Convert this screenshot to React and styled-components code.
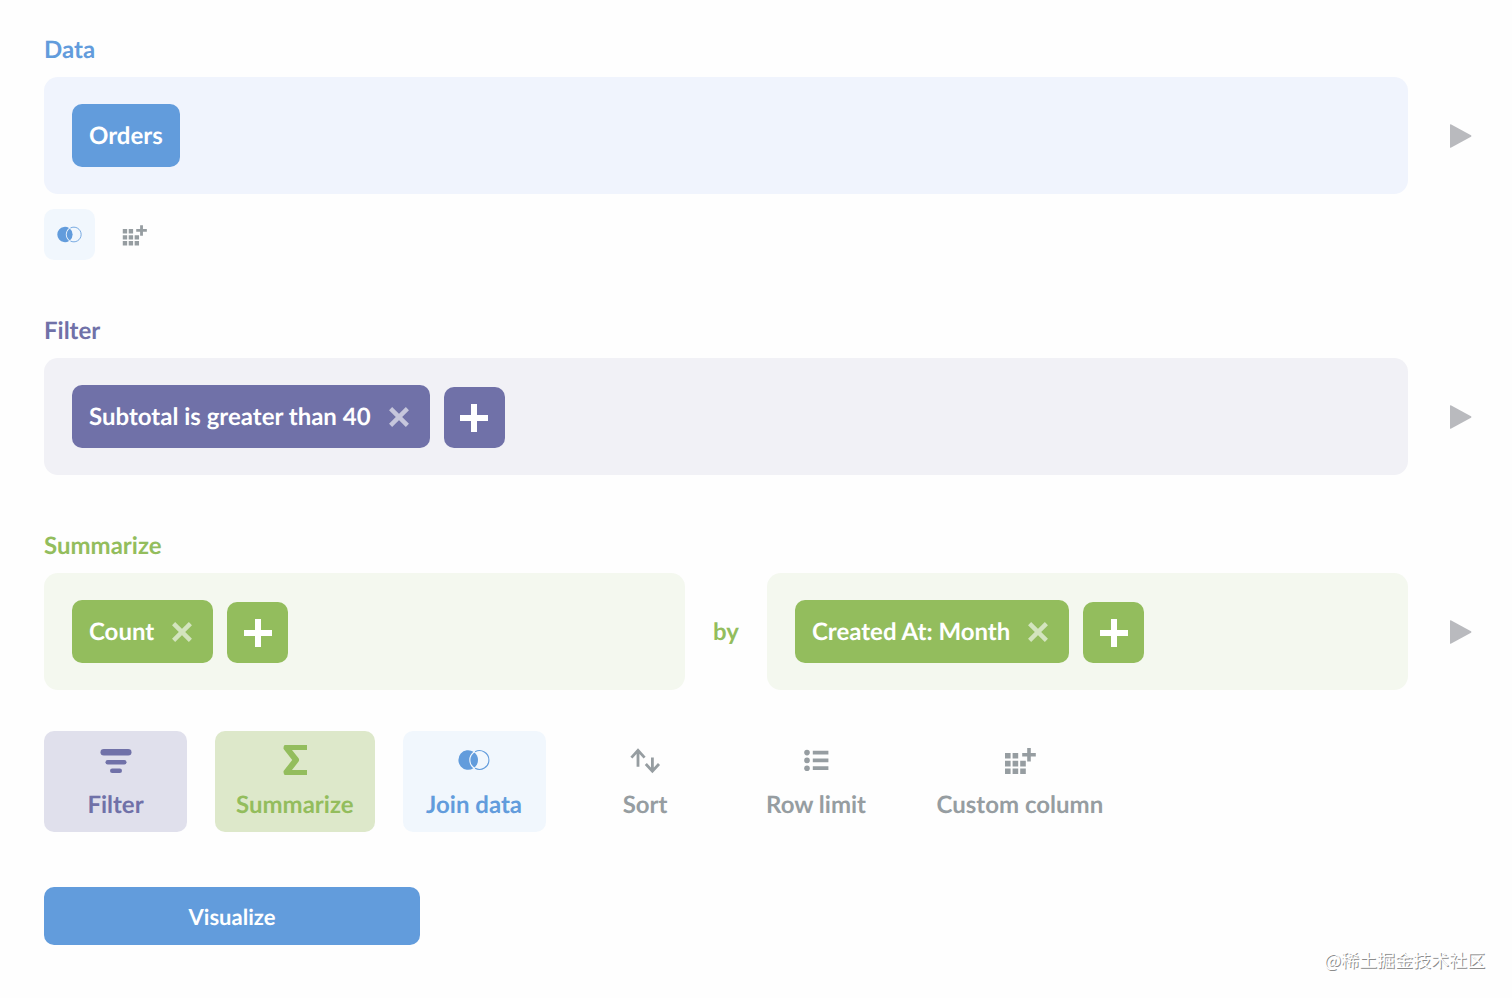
import React from 'react';
import styled, { createGlobalStyle } from 'styled-components';

const colors = {
  brand: '#629cdc',
  filter: '#7071a8',
  summarize: '#93bd5d',
  grey: '#969da1',
};

// styled-components
const GlobalStyle = createGlobalStyle`
  * {
    box-sizing: border-box;
  }
  body {
    margin: 0;
    background-color: #fefefe;
    font-family: Lato, 'Open Sans', sans-serif;
    font-weight: bold;
    font-size: 24px;
    line-height: 31px;
    text-rendering: geometricPrecision;
  }
  button {
    border: none;
    margin: 0;
    padding: 0;
    font: inherit;
    text-rendering: inherit;
    cursor: pointer;
  }
  svg {
    display: block;
    flex: none;
  }
`;

const Notebook = styled.main`
  display: flex;
  flex-direction: column;
  align-items: stretch;
  gap: 55px;
  padding: 34px 40px 0 44px;
`;

const Steps = styled.div`
  display: flex;
  flex-direction: column;
  gap: 41px;
`;

const StepList = styled.div`
  display: flex;
  flex-direction: column;
  gap: 55px;
`;

const Title = styled.h2`
  margin: 0 0 12px;
  font-size: 24px;
  line-height: 31px;
  color: ${props => props.$color};
`;

const StepRow = styled.div`
  display: flex;
  align-items: center;
  gap: 42px;
`;

const StepBody = styled.div`
  flex: 1;
  display: flex;
  align-items: center;
  gap: 28px;
`;

const Panel = styled.div`
  flex: 1 1 0;
  display: flex;
  align-items: flex-end;
  gap: 14px;
  padding: 27px 28px;
  border-radius: 14px;
  background-color: ${props => props.$bg};
`;

const Chip = styled.div`
  display: flex;
  align-items: center;
  gap: 14px;
  height: 63px;
  padding: 0 17px;
  border-radius: 10px;
  color: #fff;
  background-color: ${props => props.$color};
`;

const RemoveButton = styled.button`
  display: flex;
  align-items: center;
  justify-content: center;
  width: 28px;
  height: 28px;
  color: #fff;
  background: none;
  opacity: 0.6;
`;

const AddButton = styled.button`
  display: flex;
  align-items: center;
  justify-content: center;
  width: 61px;
  height: 61px;
  border-radius: 10px;
  color: #fff;
  background-color: ${props => props.$color};
`;

const PreviewButton = styled.button`
  width: 22px;
  height: 24px;
  color: #b9babe;
  background: none;
`;

const By = styled.span`
  color: ${colors.summarize};
`;

const SmallActions = styled.div`
  display: flex;
  gap: 14px;
  margin-top: 15px;
`;

const SmallAction = styled.button`
  display: flex;
  align-items: center;
  justify-content: center;
  width: 51px;
  height: 51px;
  border-radius: 10px;
  color: ${props => props.$color};
  background-color: ${props => props.$bg || 'transparent'};
`;

const Actions = styled.div`
  display: flex;
  flex-wrap: wrap;
  gap: 28px;
`;

const Action = styled.button`
  display: flex;
  flex-direction: column;
  align-items: center;
  gap: 13px;
  height: 101px;
  min-width: 143px;
  padding: 13px 21px 12px;
  border-radius: 10px;
  color: ${props => props.$color};
  background-color: ${props => props.$bg || 'transparent'};
`;

const VisualizeButton = styled.button`
  width: 376px;
  height: 58px;
  border-radius: 10px;
  font-size: 22px;
  color: #fff;
  background-color: ${colors.brand};
`;

const Footer = styled.footer`
  padding: 3px 27px 0;
  text-align: right;
  font-family: 'Noto Sans CJK SC', sans-serif;
  font-weight: normal;
  font-size: 18px;
  line-height: 24px;
  color: #fff;
  text-shadow: 1px 1px 0 #8c8c8c;
`;
// end styled-components

const CloseIcon = () => (
  <svg width="20" height="20" viewBox="0 0 20 20" stroke="currentColor" strokeWidth="4.4" strokeLinecap="butt">
    <path d="M1.6 1.6 18.4 18.4M18.4 1.6 1.6 18.4" fill="none" />
  </svg>
);

const PlusIcon = () => (
  <svg width="28" height="28" viewBox="0 0 28 28" fill="currentColor">
    <path d="M11 0h6v11h11v6H17v11h-6V17H0v-6h11z" />
  </svg>
);

const PlayIcon = () => (
  <svg width="22" height="24" viewBox="0 0 22 24" fill="currentColor">
    <path d="M0 .8Q0 0 .8.3L21 11.2q1 .8 0 1.6L.8 23.7Q0 24 0 23.2z" />
  </svg>
);

const JoinIcon = ({ size }) => (
  <svg width={size} height={size} viewBox="0 0 32 32" fill="currentColor">
    <path d="M15.4 7.7A9.8 9.8 0 1 0 15.4 24.3A10.4 10.4 0 0 1 15.4 7.7z" />
    <path d="M16.4 8.4A9.8 9.8 0 0 1 16.4 23.6A9.2 9.2 0 0 1 16.4 8.4z" />
    <path d="M17.1 7.7A9.4 9.4 0 1 1 17.1 24.3" fill="none" stroke="currentColor" strokeWidth="1.1" />
  </svg>
);

const ColumnIcon = ({ size }) => (
  <svg width={size} height={size} viewBox="0 0 32 32" fill="currentColor">
    <path d="M1 9h5.6v5.6H1zM8.6 9h5.6v5.6H8.6zM1 16.8h5.6v5.6H1zM8.6 16.8h5.6v5.6H8.6zM16.2 16.8h5.6v5.6h-5.6z" />
    <path d="M1 24.4h5.6V30H1zM8.6 24.4h5.6V30H8.6zM16.2 24.4h5.6V30h-5.6z" />
    <path d="M23.2 4h3.6v5h5v3.6h-5v5h-3.6v-5h-5V9h5z" />
  </svg>
);

const FilterIcon = () => (
  <svg width="32" height="32" viewBox="0 0 32 32" fill="currentColor">
    <rect x="0.5" y="5" width="31" height="6.6" rx="3.3" />
    <rect x="5.5" y="16" width="21" height="4.4" rx="2.2" />
    <rect x="10" y="24.6" width="12" height="4.4" rx="2.2" />
  </svg>
);

const SumIcon = () => (
  <svg width="32" height="32" viewBox="0 0 32 32" fill="currentColor">
    <path d="M5.6 1H28v5H13l6.6 8.2q1 1.7 0 3.4L13 26h15v5H5.6q-1.4-1.6-1-4L13.2 16 4.6 5q-.4-2.4 1-4z" />
  </svg>
);

const SortIcon = () => (
  <svg width="32" height="32" viewBox="0 0 32 32" fill="none" stroke="currentColor" strokeWidth="2.8">
    <path d="M9 22.8V6.6M2.4 13.6 9 6.4l6.6 7.2" />
    <path d="M23.4 13.6v13M16.8 20l6.6 7.2L30 20" />
  </svg>
);

const ListIcon = () => (
  <svg width="32" height="32" viewBox="0 0 32 32" fill="currentColor">
    <circle cx="7" cy="8.6" r="2.8" />
    <circle cx="7" cy="16.4" r="2.8" />
    <circle cx="7" cy="24.2" r="2.8" />
    <path d="M12.8 6.7h15.6v3.8H12.8zM12.8 14.5h15.6v3.8H12.8zM12.8 22.3h15.6v3.8H12.8z" />
  </svg>
);

const actions = [
  { name: 'Filter', color: colors.filter, bg: '#e0e0ec', icon: <FilterIcon /> },
  { name: 'Summarize', color: colors.summarize, bg: '#dde8ca', icon: <SumIcon /> },
  { name: 'Join data', color: colors.brand, bg: '#f1f7fd', icon: <JoinIcon size={32} /> },
  { name: 'Sort', color: colors.grey, icon: <SortIcon /> },
  { name: 'Row limit', color: colors.grey, icon: <ListIcon /> },
  { name: 'Custom column', color: colors.grey, icon: <ColumnIcon size={32} /> },
];

const Clause = ({ color, name }) => (
  <>
    <Chip $color={color}>
      {name}
      <RemoveButton aria-label={`Remove ${name}`}>
        <CloseIcon />
      </RemoveButton>
    </Chip>
    <AddButton $color={color} aria-label="Add">
      <PlusIcon />
    </AddButton>
  </>
);

const Step = ({ title, color, children, extra }) => (
  <section>
    <Title $color={color}>{title}</Title>
    <StepRow>
      <StepBody>{children}</StepBody>
      <PreviewButton aria-label="Preview">
        <PlayIcon />
      </PreviewButton>
    </StepRow>
    {extra}
  </section>
);

const dataActions = (
  <SmallActions>
    <SmallAction $color={colors.brand} $bg="#f1f7fd" aria-label="Join data">
      <JoinIcon size={25} />
    </SmallAction>
    <SmallAction $color={colors.grey} aria-label="Custom column">
      <ColumnIcon size={25} />
    </SmallAction>
  </SmallActions>
);

const App = () => {
  return (
    <>
      <GlobalStyle />
      <Notebook>
        <Steps>
          <StepList>
            <Step title="Data" color={colors.brand} extra={dataActions}>
              <Panel $bg="#f0f4fd">
                <Chip $color={colors.brand}>Orders</Chip>
              </Panel>
            </Step>
            <Step title="Filter" color={colors.filter}>
              <Panel $bg="#f1f1f6">
                <Clause color={colors.filter} name="Subtotal is greater than 40" />
              </Panel>
            </Step>
            <Step title="Summarize" color={colors.summarize}>
              <Panel $bg="#f4f8ef">
                <Clause color={colors.summarize} name="Count" />
              </Panel>
              <By>by</By>
              <Panel $bg="#f4f8ef">
                <Clause color={colors.summarize} name="Created At: Month" />
              </Panel>
            </Step>
          </StepList>
          <Actions>
            {actions.map(action => (
              <Action key={action.name} $color={action.color} $bg={action.bg}>
                {action.icon}
                {action.name}
              </Action>
            ))}
          </Actions>
        </Steps>
        <div>
          <VisualizeButton>Visualize</VisualizeButton>
        </div>
      </Notebook>
      <Footer>@稀土掘金技术社区</Footer>
    </>
  );
};

export default App;
